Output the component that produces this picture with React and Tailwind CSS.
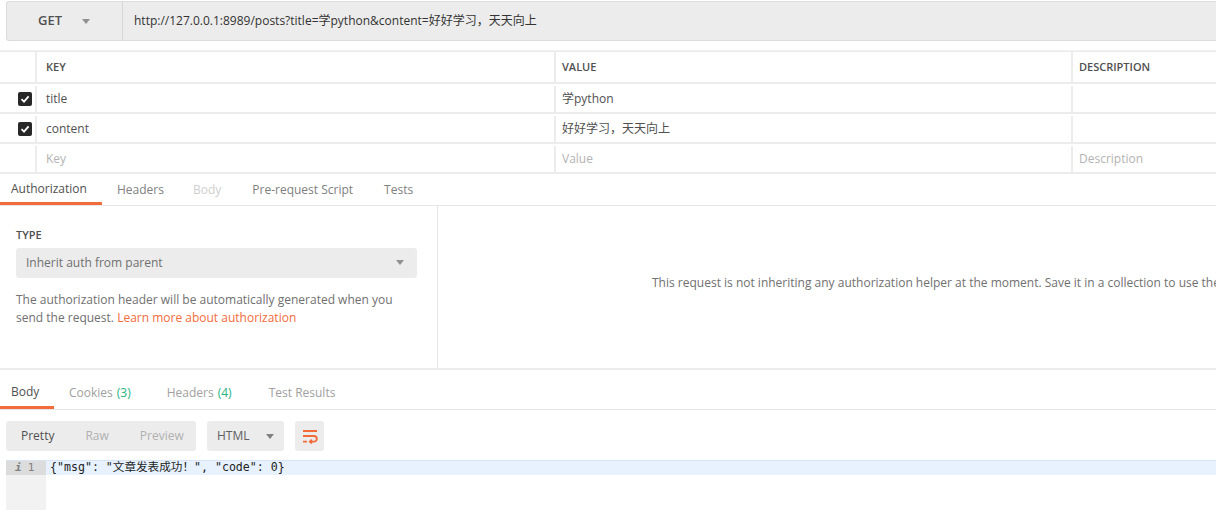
import React from "react";

const font = { fontFamily: '"Open Sans", "Noto Sans CJK SC", sans-serif' };

const Check = () => (
  <span className="flex h-[14px] w-[14px] items-center justify-center rounded-[2px] bg-[#282828]">
    <svg width="10" height="10" viewBox="0 0 10 10">
      <path d="M1.5 5.2 L4 7.6 L8.6 2.4" fill="none" stroke="#fff" strokeWidth="1.8" />
    </svg>
  </span>
);

const Row = ({ checked, k, v, d, placeholder, header }) => {
  const tone = header
    ? "text-[11px] font-semibold text-[#505050] uppercase"
    : placeholder
    ? "text-[12px] text-[#b3b3b3]"
    : "text-[12px] text-[#505050]";
  return (
    <div className={`flex border-b-2 border-[#ececec] ${header ? "h-[32px]" : "h-[30px] pt-[2px]"}`}>
      <div className="flex w-[37px] items-center justify-end pr-[3px] border-r-2 border-[#ececec]">
        {checked && <Check />}
      </div>
      <div className={`flex w-[519px] items-center pl-[9px] border-r-2 border-[#ececec] ${tone}`}>{k}</div>
      <div className={`flex w-[517px] items-center pl-[6px] border-r-2 border-[#ececec] ${tone}`}>{v}</div>
      <div className={`flex flex-1 items-center pl-[6px] ${tone}`}>{d}</div>
    </div>
  );
};

const WrapIcon = () => (
  <svg width="18" height="16" viewBox="0 0 18 16">
    <path
      d="M2 3 H16 M2 8 H13 A2.8 2.8 0 0 1 13 13.6 H9 M10.8 11.6 L8.8 13.6 L10.8 15.4 M2 13.6 H6"
      fill="none"
      stroke="#f26b3a"
      strokeWidth="1.8"
    />
  </svg>
);

export default function App() {
  return (
    <div className="h-[510px] w-[1216px] overflow-hidden bg-white text-[12px] text-[#505050]" style={font}>
      {/* URL bar */}
      <div className="pl-[6px] pt-[1px] h-[51px] border-b border-[#f0f0f0]">
        <div className="flex h-[40px] rounded-l-[3px] border border-r-0 border-[#dcdcdc] bg-[#ececec]">
          <div className="flex w-[116px] items-center gap-[20px] border-r border-[#d6d6d6] pl-[31px] text-[13px] font-semibold text-[#505050]">
            GET
            <svg width="8" height="5" viewBox="0 0 8 5">
              <path d="M0 0 H8 L4 5 Z" fill="#909090" />
            </svg>
          </div>
          <div className="flex items-center pl-[11px] text-[12px] text-[#333]">
            http://127.0.0.1:8989/posts?title=学python&content=好好学习，天天向上
          </div>
        </div>
      </div>

      {/* Params table */}
      <div className="border-t border-[#ececec]">
        <Row header k="Key" v="Value" d="Description" />
        <Row checked k="title" v="学python" d="" />
        <Row checked k="content" v="好好学习，天天向上" d="" />
        <Row placeholder k="Key" v="Value" d="Description" />
      </div>

      {/* Request tabs */}
      <div className="flex h-[32px] items-stretch border-b border-[#e6e6e6] text-[12px]">
        <div className="flex w-[102px] items-center border-b-[3px] border-[#f26b3a] pl-[11px] pt-[1px] text-[#505050]">
          Authorization
        </div>
        <div className="flex items-center pl-[15px] pt-[1px] text-[#808080]">Headers</div>
        <div className="flex items-center pl-[29px] pt-[1px] text-[#cfcfcf]">Body</div>
        <div className="flex items-center pl-[31px] pt-[1px] text-[#808080]">Pre-request Script</div>
        <div className="flex items-center pl-[31px] pt-[1px] text-[#808080]">Tests</div>
      </div>

      {/* Auth panel */}
      <div className="flex h-[164px] border-b-2 border-[#ececec]">
        <div className="w-[438px] border-r border-[#e6e6e6] pl-[16px] pr-[20px] pt-[21px]">
          <div className="text-[11px] font-semibold text-[#505050]">TYPE</div>
          <div className="mt-[4px] flex h-[30px] w-[401px] items-center justify-between rounded-[3px] bg-[#ececec] pl-[10px] pr-[13px] text-[12px] text-[#707070]">
            Inherit auth from parent
            <svg width="8" height="5" viewBox="0 0 8 5">
              <path d="M0 0 H8 L4 5 Z" fill="#909090" />
            </svg>
          </div>
          <p className="mt-[13px] w-[400px] text-[12px] leading-[18px] text-[#707070]">
            The authorization header will be automatically generated when you send the request.{" "}
            <span className="text-[#f26b3a]">Learn more about authorization</span>
          </p>
        </div>
        <div className="flex flex-1 items-center overflow-hidden whitespace-nowrap pl-[214px] pb-[8px] text-[12px] text-[#707070]">
          This request is not inheriting any authorization helper at the moment. Save it in a collection to use the parent's authorization helper.
        </div>
      </div>

      {/* Response tabs */}
      <div className="flex h-[40px] items-stretch border-b border-[#e6e6e6] text-[12px]">
        <div className="flex w-[54px] items-center border-b-[3px] border-[#f26b3a] pl-[11px] pt-[7px] text-[#505050]">
          Body
        </div>
        <div className="flex items-center pl-[15px] pt-[7px] text-[#a0a0a0]">
          Cookies <span className="ml-[4px] text-[#26b47f]">(3)</span>
        </div>
        <div className="flex items-center pl-[36px] pt-[7px] text-[#a0a0a0]">
          Headers <span className="ml-[4px] text-[#26b47f]">(4)</span>
        </div>
        <div className="flex items-center pl-[37px] pt-[7px] text-[#a0a0a0]">Test Results</div>
      </div>

      {/* Toolbar */}
      <div className="flex items-center gap-[11px] pl-[6px] pt-[11px] text-[12px]">
        <div className="flex h-[30px] w-[190px] items-center gap-[31px] rounded-[3px] bg-[#ececec] pl-[15px]">
          <span className="text-[#505050]">Pretty</span>
          <span className="text-[#b0b0b0]">Raw</span>
          <span className="text-[#b0b0b0]">Preview</span>
        </div>
        <div className="flex h-[30px] w-[77px] items-center gap-[16px] rounded-[3px] bg-[#ececec] pl-[10px] text-[#606060]">
          HTML
          <svg width="8" height="5" viewBox="0 0 8 5">
            <path d="M0 0 H8 L4 5 Z" fill="#808080" />
          </svg>
        </div>
        <div className="flex h-[30px] w-[29px] items-center justify-center rounded-[3px] bg-[#ececec]">
          <WrapIcon />
        </div>
      </div>

      {/* Code */}
      <div className="ml-[6px] mt-[9px] flex h-[60px] border-t border-[#d6e4f5]">
        <div className="w-[40px] bg-[#f2f2f2]">
          <div
            className="flex h-[14px] items-center gap-[6px] bg-[#dcdcdc] pl-[9px] text-[11px] text-[#808080]"
            style={{ fontFamily: '"DejaVu Sans Mono", monospace' }}
          >
            <span className="italic font-bold">i</span>1
          </div>
        </div>
        <div className="flex-1">
          <div
            className="flex h-[14px] items-center bg-[#e8f2ff] pl-[4px] text-[11.6px] text-[#222]"
            style={{ fontFamily: '"DejaVu Sans Mono", "Noto Sans CJK SC", monospace' }}
          >
            {'{"msg": "文章发表成功！", "code": 0}'}
          </div>
        </div>
      </div>
    </div>
  );
}
